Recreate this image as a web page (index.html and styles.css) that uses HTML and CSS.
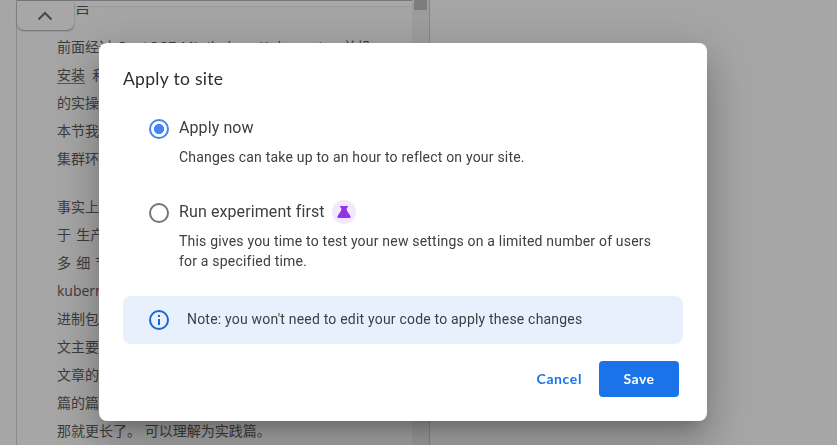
FILE: index.html
```html
<!DOCTYPE html>
<html lang="en">
<head>
<meta charset="utf-8">
<title>Apply to site</title>
<link rel="stylesheet" href="styles.css">
</head>
<body>
<main class="preview" lang="zh">
  <article class="article">
    <h2>前言</h2>
    <p>前面经过 <span class="wide">CentOS7 Minikube、Kubernetes</span> 单机<br><a>安装</a>&nbsp; 和<br>的实操<br>本节我<br>集群环</p>
    <p>事实上<br><span class="spaced">于 生产</span><br><span class="spaced">多 细 节</span><br>kubern<br>进制包<br>文主要<br>文章的<br>篇的篇<br>那就更长了。 可以理解为实践篇。</p>
  </article>
  <div class="scrollbar"><div class="thumb"></div></div>
  <div class="ad-bar"></div>
  <div class="collapse"><svg width="16" height="10" viewBox="0 0 16 10"><path d="M1.5 8.5 8 2l6.5 6.5"/></svg></div>
</main>
<div class="backdrop">
  <section class="dialog" role="dialog">
    <h1>Apply to site</h1>
    <div class="option">
      <span class="radio checked"></span>
      <div class="option-text">
        <div class="label">Apply now</div>
        <p>Changes can take up to an hour to reflect on your site.</p>
      </div>
    </div>
    <div class="option">
      <span class="radio"></span>
      <div class="option-text">
        <div class="label">Run experiment first
          <span class="flask"><svg width="14" height="12" viewBox="0 0 14 12"><path d="M3.1 0h7.8v1.5H9.8v3L13.4 10c.6 1 .1 2-1 2H1.6c-1.1 0-1.6-1-1-2l3.6-5.5v-3H3.1z"/></svg></span>
        </div>
        <p>This gives you time to test your new settings on a limited number of users for a specified time.</p>
      </div>
    </div>
    <div class="note">
      <svg width="20" height="20" viewBox="0 0 20 20"><path d="M9 5h2v2H9zm0 4h2v6H9zm1-9a10 10 0 1 0 0 20 10 10 0 0 0 0-20zm0 18a8 8 0 1 1 0-16 8 8 0 0 1 0 16z"/></svg>
      <span>Note: you won't need to edit your code to apply these changes</span>
    </div>
    <div class="actions">
      <button class="cancel">Cancel</button>
      <button class="save">Save</button>
    </div>
  </section>
</div>
</body>
</html>
```
FILE: styles.css
```css
* { box-sizing: border-box; }
body {
  margin: 0;
  height: 445px;
  overflow: hidden;
  background: #a6a6a6;
  font-family: Roboto, sans-serif;
}
h1, h2, p { margin: 0; font-weight: 400; }

.preview {
  position: relative;
  display: flex;
  width: 414px;
  height: 445px;
  margin-left: 16px;
  border-left: 1px solid #8b8b8b;
  border-right: 1px solid #898989;
}
.article {
  flex: 1;
  padding-left: 40px;
  color: #3c3c3c;
  font: 14px/28px "Open Sans", "Noto Sans CJK SC", sans-serif;
  white-space: nowrap;
}
.article h2 {
  height: 33px;
  font-size: 17px;
  line-height: 14px;
}
.article p { margin-bottom: 20px; }
.article a {
  display: inline-block;
  height: 19px;
  line-height: 19px;
  border-bottom: 1px solid #555;
}
.wide { letter-spacing: .45px; }
.spaced { word-spacing: 1.5px; }
.scrollbar {
  width: 17px;
  padding: 0 2px;
  background: #9e9e9e;
}
.thumb { height: 10px; background: #7e7e7e; }
.ad-bar {
  position: absolute;
  top: 0;
  left: 0;
  width: 395px;
  height: 6px;
  background: #a8a8a8;
  border-top: 1px solid #77777c;
  box-shadow: 0 1px 2px rgba(0, 0, 0, .06);
}
.collapse {
  position: absolute;
  top: 1px;
  left: 0;
  display: flex;
  justify-content: center;
  width: 57px;
  height: 29px;
  padding: 10px 2px 0 0;
  background: #a7a7a7;
  border-radius: 0 0 7px 7px;
  box-shadow: 0 1px 2px rgba(0, 0, 0, .35);
}
.collapse svg { fill: none; stroke: #484848; stroke-width: 2; }

.backdrop {
  position: fixed;
  inset: 0;
  padding: 43px 0 0 99px;
}
.dialog {
  display: flex;
  flex-direction: column;
  width: 608px;
  height: 378px;
  padding: 24px;
  border-radius: 8px;
  background: #fff;
  color: #3c4043;
  box-shadow: 0 11px 15px -7px rgba(0, 0, 0, .2), 0 24px 38px 3px rgba(0, 0, 0, .14), 0 9px 46px 8px rgba(0, 0, 0, .12);
}
.dialog h1 {
  height: 49px;
  color: #2d2e31;
  font: 400 17.5px/24px Lato, sans-serif;
  letter-spacing: .3px;
}
.option {
  display: flex;
  height: 84px;
  padding-left: 26px;
}
.option + .option { height: 96px; }
.radio {
  flex: none;
  width: 20px;
  height: 20px;
  margin: 3px 10px 0 0;
  border: 2px solid #757575;
  border-radius: 50%;
}
.radio.checked {
  border-color: #4285f4;
  background: radial-gradient(circle, #4285f4 4.8px, transparent 5.3px);
}
.label {
  display: flex;
  height: 24px;
  font-size: 16px;
  line-height: 23px;
  letter-spacing: .1px;
}
.flask {
  display: flex;
  align-items: center;
  justify-content: center;
  width: 24px;
  height: 24px;
  margin-left: 7px;
  border-radius: 50%;
  background: #f3e8fd;
}
.flask svg { fill: #9334e6; }
.option p {
  width: 490px;
  padding-top: 7px;
  font-size: 14px;
  line-height: 20px;
  letter-spacing: .2px;
}
.note {
  display: flex;
  align-items: center;
  height: 48px;
  padding-left: 26px;
  gap: 18px;
  border-radius: 8px;
  background: #e8f0fe;
  font-size: 14px;
  letter-spacing: .2px;
}
.note svg { fill: #1967d2; }
.note span { padding-bottom: 2px; }
.actions {
  display: flex;
  justify-content: flex-end;
  padding: 17px 4px 0 0;
}
.actions button {
  height: 36px;
  padding: 0 0 2px;
  border: 0;
  border-radius: 4px;
  font: 700 14px Lato, sans-serif;
  letter-spacing: .4px;
}
.cancel {
  margin-right: 17px;
  background: none;
  color: #1a73e8;
}
.actions .cancel { letter-spacing: .6px; }
.save {
  width: 80px;
  background: #1a73e8;
  color: #fff;
}
```
